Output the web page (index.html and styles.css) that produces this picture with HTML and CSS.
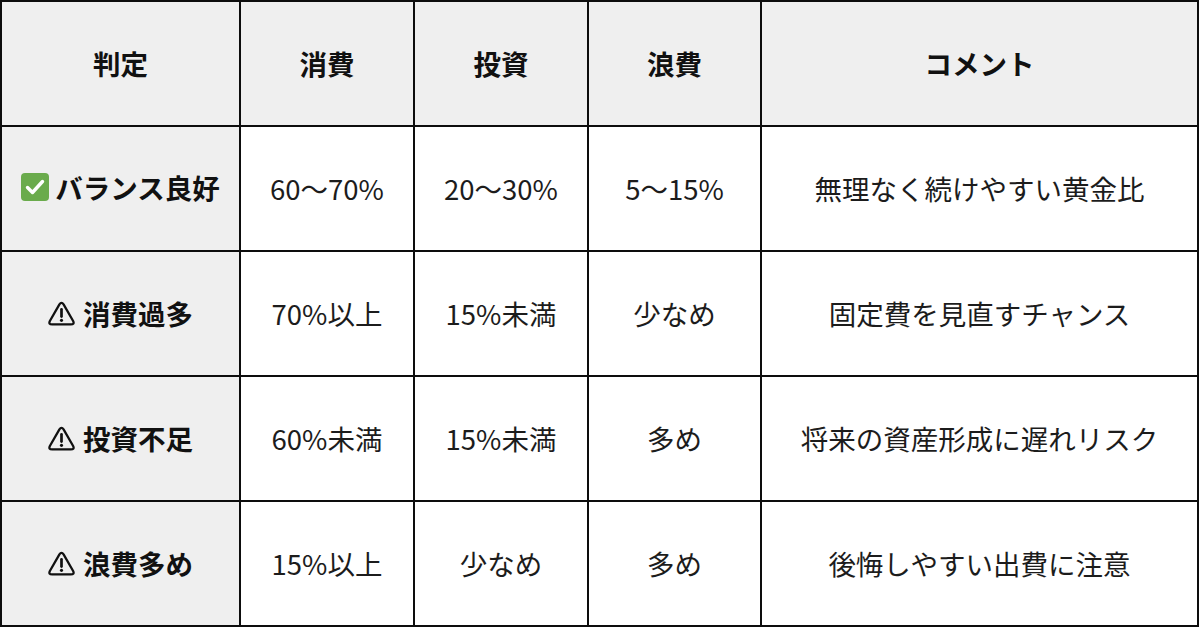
FILE: index.html
```html
<!DOCTYPE html>
<html lang="ja">
<head>
<meta charset="utf-8">
<title>判定表</title>
<link rel="stylesheet" href="styles.css">
</head>
<body>
<table class="grid">
  <colgroup>
    <col class="c1"><col class="c2"><col class="c3"><col class="c4"><col class="c5">
  </colgroup>
  <thead>
    <tr>
      <th>判定</th>
      <th>消費</th>
      <th>投資</th>
      <th>浪費</th>
      <th>コメント</th>
    </tr>
  </thead>
  <tbody>
    <tr>
      <th class="label">
        <span class="lab">
          <svg class="ico check" viewBox="0 0 28 28" aria-hidden="true"><rect x="0" y="0" width="28" height="28" rx="4" fill="#6aab4c"/><path d="M6.5 14.5 L11.5 19.5 L21.5 8.5" fill="none" stroke="#fff" stroke-width="3.4" stroke-linecap="round" stroke-linejoin="round"/></svg>
          <span>バランス良好</span>
        </span>
      </th>
      <td>60〜70%</td>
      <td>20〜30%</td>
      <td>5〜15%</td>
      <td>無理なく続けやすい黄金比</td>
    </tr>
    <tr>
      <th class="label">
        <span class="lab">
          <svg class="ico warn" viewBox="0 0 26 24" aria-hidden="true"><path d="M11 3.2 Q13 0.2 15 3.2 L24.2 19.2 Q25.8 22.5 22 22.5 L4 22.5 Q0.2 22.5 1.8 19.2 Z" fill="none" stroke="#111" stroke-width="2.2" stroke-linejoin="round"/><path d="M13 8 L13 15" stroke="#111" stroke-width="2.6" stroke-linecap="round"/><circle cx="13" cy="18.6" r="1.5" fill="#111"/></svg>
          <span>消費過多</span>
        </span>
      </th>
      <td>70%以上</td>
      <td>15%未満</td>
      <td>少なめ</td>
      <td>固定費を見直すチャンス</td>
    </tr>
    <tr>
      <th class="label">
        <span class="lab">
          <svg class="ico warn" viewBox="0 0 26 24" aria-hidden="true"><path d="M11 3.2 Q13 0.2 15 3.2 L24.2 19.2 Q25.8 22.5 22 22.5 L4 22.5 Q0.2 22.5 1.8 19.2 Z" fill="none" stroke="#111" stroke-width="2.2" stroke-linejoin="round"/><path d="M13 8 L13 15" stroke="#111" stroke-width="2.6" stroke-linecap="round"/><circle cx="13" cy="18.6" r="1.5" fill="#111"/></svg>
          <span>投資不足</span>
        </span>
      </th>
      <td>60%未満</td>
      <td>15%未満</td>
      <td>多め</td>
      <td>将来の資産形成に遅れリスク</td>
    </tr>
    <tr>
      <th class="label">
        <span class="lab">
          <svg class="ico warn" viewBox="0 0 26 24" aria-hidden="true"><path d="M11 3.2 Q13 0.2 15 3.2 L24.2 19.2 Q25.8 22.5 22 22.5 L4 22.5 Q0.2 22.5 1.8 19.2 Z" fill="none" stroke="#111" stroke-width="2.2" stroke-linejoin="round"/><path d="M13 8 L13 15" stroke="#111" stroke-width="2.6" stroke-linecap="round"/><circle cx="13" cy="18.6" r="1.5" fill="#111"/></svg>
          <span>浪費多め</span>
        </span>
      </th>
      <td>15%以上</td>
      <td>少なめ</td>
      <td>多め</td>
      <td>後悔しやすい出費に注意</td>
    </tr>
  </tbody>
</table>
</body>
</html>
```
FILE: styles.css
```css
html, body {
  margin: 0;
  padding: 0;
  background: #ffffff;
}

body {
  font-family: "Noto Sans CJK JP", "Noto Sans", sans-serif;
  color: #1a1a1a;
}

.grid {
  width: 1199px;
  height: 626px;
  border-collapse: collapse;
  table-layout: fixed;
  border: 2px solid #222;
}

.c1 { width: 239px; }
.c2 { width: 174px; }
.c3 { width: 174px; }
.c4 { width: 173px; }
.c5 { width: auto; }

.grid tr {
  height: 125px;
}

.grid th,
.grid td {
  border: 2px solid #0d0d0d;
  padding: 0;
  text-align: center;
  vertical-align: middle;
  font-size: 27.5px;
  line-height: 1.2;
}

.grid thead th {
  background: #efefef;
  font-weight: 700;
  color: #111;
}

.grid td {
  font-weight: 400;
  background: #ffffff;
  color: #1c1c1c;
}

.grid th.label {
  background: #efefef;
  font-weight: 700;
  color: #111;
}

.lab {
  display: inline-flex;
  align-items: center;
  gap: 6px;
}

.ico {
  flex: none;
  display: block;
}

.check {
  width: 28px;
  height: 28px;
}

.warn {
  width: 27px;
  height: 25px;
  margin-right: 2px;
}
```
